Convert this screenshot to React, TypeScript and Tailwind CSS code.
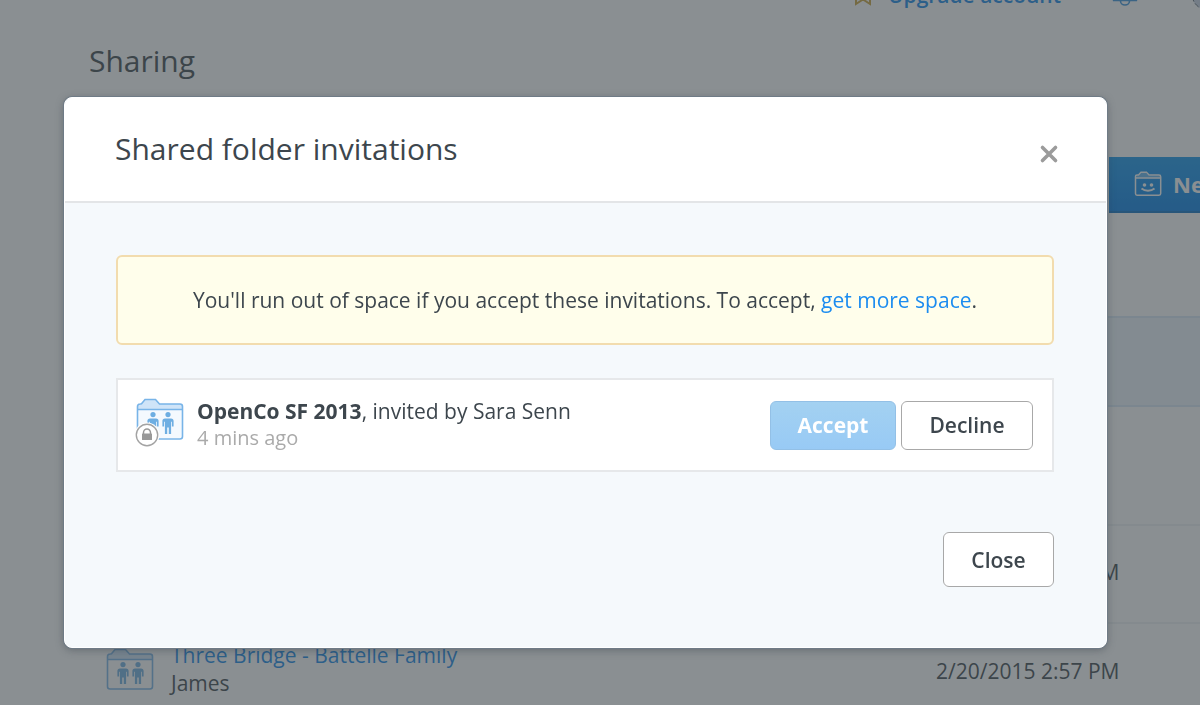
type FolderRow = {
  name?: string;
  owner?: string;
  modified?: string;
  rowClass: string;
};

const rows: FolderRow[] = [
  { rowClass: "h-[89px] border-y-2 border-[#d9e9f8] bg-[#eef6fd]" },
  { rowClass: "h-[119px]" },
  { rowClass: "h-[98px] border-t-2 border-[#f0f3f5]", modified: "2/20/2015 2:57 PM" },
  {
    rowClass: "h-[98px] border-t-2 border-[#f0f3f5]",
    name: "Three Bridge - Battelle Family",
    owner: "James",
    modified: "2/20/2015 2:57 PM",
  },
];

function Person({ x }: { x: number }) {
  return (
    <g transform={`translate(${x} 14)`} fill="#6eaee2">
      <circle cx="6" cy="2.6" r="2.6" />
      <path d="M3 6.4h6c1.700 0 2.600 1 2.600 2.600V14.500H9.900V9.800H9.100V22H6.800V15.500H5.200V22H2.900V9.800H2.100v4.700H.4V9C.4 7.400 1.300 6.400 3 6.400z" />
    </g>
  );
}

function SharedFolderIcon({ locked = false }: { locked?: boolean }) {
  return (
    <svg className="block h-[50px] w-[50px] shrink-0" viewBox="0 0 50 50" fill="none" aria-hidden="true">
      {locked && <path d="M3 12h44v28H3z" fill="#f4f9fe" />}
      <path d="M3 12V8q0-2 2-2h1l4-4.500h10.500L24.500 6H45q2.500 0 2.500 2.500V12z" fill="#cfe4f8" />
      <path
        d="M2.500 38.500V8.500q0-2.200 2.500-2.500l1.500-.3L10 1.500h10.500L24.500 6H45q2.500 0 2.500 2.500v30q0 2.500-2.500 2.500H5q-2.500 0-2.500-2.500z"
        stroke="#78b4e8"
        strokeWidth="1.6"
      />
      <path d="M2.500 11.500h45" stroke="#78b4e8" strokeWidth="1.600" />
      <Person x={12} />
      <Person x={27} />
      {locked && (
        <g>
          <circle cx="12" cy="37" r="12.500" fill="#fff" />
          <circle cx="12" cy="37" r="10.700" fill="#fff" stroke="#a3a3a3" strokeWidth="1.400" />
          <path d="M8.500 36v-1.500a3.500 3.500 0 0 1 7 0V36" stroke="#999" strokeWidth="1.500" />
          <rect x="7" y="35.500" width="10" height="6.500" rx=".6" fill="#999" />
        </g>
      )}
    </svg>
  );
}

function SmileFolderIcon() {
  return (
    <svg className="block h-[26px] w-7 shrink-0" viewBox="0 0 28 26" fill="none" stroke="#fff" strokeWidth="1.500" aria-hidden="true">
      <path d="M1.500 22.500V5.500q0-1.500 1.500-1.500h1.500L7 1.300h5.500L15 4h10q1.700 0 1.700 1.700v16.800q0 1.700-1.700 1.700H3q-1.500 0-1.500-1.700z" />
      <path d="M3 4.500h2L7.500 2H12l2.500 2.700H26v2H2z" fill="#fff" fillOpacity=".35" stroke="none" />
      <path d="M2 7h24.500" />
      <circle cx="10.500" cy="14" r="1.800" fill="#fff" stroke="none" />
      <circle cx="17.500" cy="14" r="1.800" fill="#fff" stroke="none" />
      <path d="M7.500 17.500c3.500 3 9.500 3 13 0" strokeWidth="1.800" />
    </svg>
  );
}

function TopBar() {
  return (
    <div className="-mt-8 flex h-10 items-end justify-end">
      <svg className="mr-[17px] mb-[2px] h-5 w-4 shrink-0" viewBox="0 0 16 20" fill="none" stroke="#cba43a" strokeWidth="2" aria-hidden="true">
        <path d="M1 1h14v17l-7-4.500L1 18z" />
      </svg>
      <a href="#upgrade" className="mb-px text-[21px] leading-6 font-semibold whitespace-nowrap text-[#1587e8]">
        Upgrade account
      </a>
      <svg className="mr-[51px] mb-[2px] ml-[50px] h-7 w-7 shrink-0" viewBox="0 0 28 28" fill="none" stroke="#3a93dd" strokeWidth="1.600" aria-hidden="true">
        <path d="M2 22.500c4-2 5-5 5-12a7 7 0 0 1 14 0c0 7 1 10 5 12z" fill="#8fc3ee" />
        <path d="M9.500 23a4.500 4 0 0 0 9 0" />
      </svg>
      <svg className="-mr-[26px] -mb-1 h-9 w-9 shrink-0" viewBox="0 0 36 36" fill="#c9d2e4" stroke="#5a6670" strokeDasharray="5 2" aria-hidden="true">
        <circle cx="18" cy="18" r="16" />
      </svg>
    </div>
  );
}

function SharingPage() {
  return (
    <div className="min-h-screen overflow-hidden bg-white">
      <TopBar />
      <main className="pl-[89px]">
        <h1 className="mt-[31px] text-[30px] leading-11">Sharing</h1>
        <div className="mt-[74px] flex justify-end">
          <button
            type="button"
            className="-mr-28 flex h-14 w-[203px] items-center gap-[11px] border-b-2 border-[#0a70c4] bg-linear-to-b from-[#1496ec] to-[#057ee6] pl-[25px] text-[22px] font-bold whitespace-nowrap text-white"
          >
            <SmileFolderIcon />
            New folder
          </button>
        </div>
        <table className="mt-[103px] w-full border-collapse">
          <tbody>
            {rows.map((row, i) => (
              <tr key={i} className={row.rowClass}>
                <td className="pl-4">
                  {row.name && (
                    <div className="flex items-center gap-4">
                      <SharedFolderIcon />
                      <div className="pb-2 leading-7">
                        <a href="#folder" className="text-[#1587e8]">
                          {row.name}
                        </a>
                        <p>{row.owner}</p>
                      </div>
                    </div>
                  )}
                </td>
                <td className="w-[264px] pb-0.5 whitespace-nowrap">{row.modified}</td>
              </tr>
            ))}
          </tbody>
        </table>
      </main>
    </div>
  );
}

function InvitationDialog() {
  return (
    <div
      role="dialog"
      aria-modal="true"
      aria-labelledby="dialog-title"
      className="w-full rounded-lg border border-white bg-[#f5f9fc] shadow-[0_0_0_1px_#6f7b86,0_2px_8px_rgba(40,50,60,0.4)]"
    >
      <header className="flex h-[105px] items-center justify-between rounded-t-lg border-b-2 border-[#e3e5e7] bg-white pr-[45px] pl-[50px]">
        <h2 id="dialog-title" className="pb-[2px] text-[30px] leading-10">
          Shared folder invitations
        </h2>
        <button type="button" aria-label="Close dialog" className="mt-2 p-[2px]">
          <svg className="h-5 w-5" viewBox="0 0 20 20" stroke="#9b9b9b" strokeWidth="3.600" strokeLinecap="round">
            <path d="M3.500 3.500l13 13M16.500 3.500l-13 13" />
          </svg>
        </button>
      </header>
      <div className="pt-[52px] pr-[52px] pb-[60px] pl-[51px]">
        <p className="rounded-md border-2 border-[#f2dcae] bg-[#fffeeb] py-7 text-center leading-[30px]">
          You'll run out of space if you accept these invitations. To accept,{" "}
          <a href="#space" className="text-[#1c8cf0]">
            get more space
          </a>
          .
        </p>
        <div className="mt-[33px] flex h-[94px] items-center border-2 border-[#e6e8ea] bg-white pr-[19px] pl-[17px]">
          <div className="pb-1">
            <SharedFolderIcon locked />
          </div>
          <div className="ml-3 flex-1 pb-[2px]">
            <p className="leading-7">
              <b>OpenCo SF 2013</b>, invited by Sara Senn
            </p>
            <p className="text-xl leading-[26px] text-[#aaa]">4 mins ago</p>
          </div>
          <div className="flex gap-[5px] font-semibold">
            <button
              type="button"
              disabled
              className="h-[49px] w-[126px] rounded-md border border-[#93c0e6] bg-linear-to-b from-[#a3d1f1] to-[#98caf5] pt-[2px] font-bold text-white"
            >
              Accept
            </button>
            <button type="button" className="h-[49px] w-[132px] rounded-md border border-[#a8a8a8] bg-white pt-[2px]">
              Decline
            </button>
          </div>
        </div>
        <div className="mt-[60px] flex justify-end">
          <button type="button" className="h-[55px] w-[111px] rounded-md border border-[#a8a8a8] bg-white pt-[2px] font-semibold">
            Close
          </button>
        </div>
      </div>
    </div>
  );
}

export default function App() {
  return (
    <div className="h-screen overflow-hidden font-['Open_Sans',sans-serif] text-[21px] text-[#3d464d]">
      <SharingPage />
      <div className="fixed inset-0 flex items-start bg-[#3c4449]/60 pt-[97px] pr-[93px] pl-16">
        <InvitationDialog />
      </div>
    </div>
  );
}
